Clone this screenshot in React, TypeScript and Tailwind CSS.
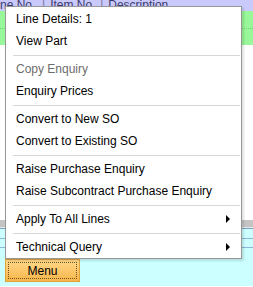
import { Fragment } from 'react';

type Item = { label: string; disabled?: boolean; sub?: boolean } | 'sep';

const items: Item[] = [
  { label: 'Line Details: 1' },
  { label: 'View Part' },
  'sep',
  { label: 'Copy Enquiry', disabled: true },
  { label: 'Enquiry Prices' },
  'sep',
  { label: 'Convert to New SO' },
  { label: 'Convert to Existing SO' },
  'sep',
  { label: 'Raise Purchase Enquiry' },
  { label: 'Raise Subcontract Purchase Enquiry' },
  'sep',
  { label: 'Apply To All Lines', sub: true },
  'sep',
  { label: 'Technical Query', sub: true },
];

function ContextMenu() {
  return (
    <div className="absolute left-[5px] top-[6px] w-[237px] border border-[#979797] bg-white pt-px shadow-[2px_2px_2px_rgba(0,0,0,0.12)]">
      {items.map((it, i) =>
        it === 'sep' ? (
          <div key={i} className="flex h-[6px] items-center pl-[7px] pr-px">
            <div className="h-px w-full bg-[#d7d7d7]" />
          </div>
        ) : (
          <div
            key={i}
            className={`flex h-[22px] items-center justify-between pl-[10px] pr-[11px] text-[12px] ${
              it.disabled ? 'text-[#6d6d6d]' : 'text-black'
            }`}
          >
            <span>{it.label}</span>
            {it.sub && (
              <span className="h-0 w-0 border-y-[4px] border-l-[4px] border-y-transparent border-l-black" />
            )}
          </div>
        )
      )}
    </div>
  );
}

export default function App() {
  return (
    <div
      className="relative h-[287px] w-[253px] overflow-hidden bg-white"
      style={{ fontFamily: '"Liberation Sans", Arial, sans-serif' }}
    >
      {/* grid header */}
      <div className="flex h-[11px] items-end overflow-hidden bg-[#c9c9fb] text-[12px] leading-[12px] text-[#3b3b6b]">
        {['ne No', 'Item No', 'Description'].map((h, i) => (
          <Fragment key={h}>
            {i > 0 && <span className="ml-[3px] mr-[5px] text-[#7a7aa0]">|</span>}
            <span className={i === 0 ? 'w-[39px]' : i === 1 ? 'w-[47px]' : ''}>{h}</span>
          </Fragment>
        ))}
      </div>

      {/* selected rows */}
      <div className="h-[18px] border-b border-dotted border-[#7fcf7f] bg-[#98f798]" />
      <div className="h-[16px] bg-[#98f798]" />

      <div className="h-[175px] bg-white" />

      {/* lower grid */}
      <div className="h-[7px] bg-[#c4c4c4]" />
      <div className="h-[2px] border-b border-[#7da2c8] bg-[#e8e8e8]" />
      <div className="h-[10px] border-b border-[#8fb4d6] bg-[#ccffff]" />
      <div className="h-[9px] border-b border-[#8fb4d6] bg-[#ccffff]" />

      <div className="bg-[#ccffff] px-[5px] pt-[11px] pb-[4px]">
        <div className="flex h-[23px] w-[75px] items-center justify-center border border-[#e2a23a] bg-gradient-to-b from-[#ffd98a] to-[#f7b547] p-[2px]">
          <div className="flex h-full w-full items-center justify-center border border-dotted border-[#6b5020] text-[12px] text-black">
            Menu
          </div>
        </div>
      </div>

      <ContextMenu />
    </div>
  );
}
